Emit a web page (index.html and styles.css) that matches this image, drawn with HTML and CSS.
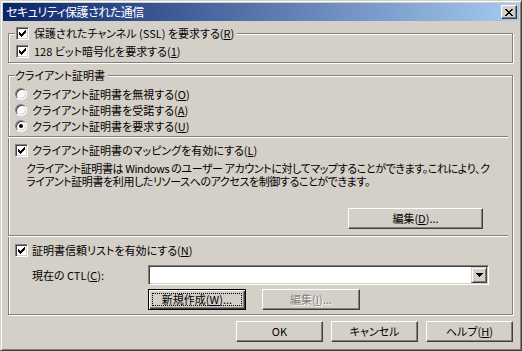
FILE: index.html
```html
<!DOCTYPE html>
<html lang="ja">
<head>
    <meta charset="UTF-8">
    <meta name="viewport" content="width=device-width, initial-scale=1.0">
    <link rel="stylesheet" href="styles.css">
</head>
<body>
    <div class="window">
        <div class="titlebar">
            <span class="title">セキュリティ保護された通信</span>
            <button class="close-btn">
                <svg width="8" height="7" viewBox="0 0 8 7" shape-rendering="crispEdges">
                    <rect x="0" y="0" width="2" height="1"/><rect x="6" y="0" width="2" height="1"/>
                    <rect x="1" y="1" width="2" height="1"/><rect x="5" y="1" width="2" height="1"/>
                    <rect x="2" y="2" width="4" height="1"/>
                    <rect x="3" y="3" width="2" height="1"/>
                    <rect x="2" y="4" width="4" height="1"/>
                    <rect x="1" y="5" width="2" height="1"/><rect x="5" y="5" width="2" height="1"/>
                    <rect x="0" y="6" width="2" height="1"/><rect x="6" y="6" width="2" height="1"/>
                </svg>
            </button>
        </div>

        <div class="client">
            <!-- SSL -->
            <div class="group group-ssl">
                <div class="check-row legend-check">
                    <span class="check-box checked"></span>
                    <span>保護されたチャンネル (SSL) を要求する(<u>R</u>)</span>
                </div>
                <div class="check-row second">
                    <span class="check-box checked"></span>
                    <span>128 ビット暗号化を要求する(<u>1</u>)</span>
                </div>
            </div>

            <!-- certificados de cliente -->
            <div class="group group-cert">
                <div class="legend-text">クライアント証明書</div>
                <div class="radios">
                    <div class="radio-row"><span class="radio"></span><span>クライアント証明書を無視する(<u>O</u>)</span></div>
                    <div class="radio-row"><span class="radio"></span><span>クライアント証明書を受諾する(<u>A</u>)</span></div>
                    <div class="radio-row"><span class="radio selected"></span><span>クライアント証明書を要求する(<u>U</u>)</span></div>
                </div>

                <div class="sep sep-top"></div>

                <div class="check-row inner mapping">
                    <span class="check-box checked"></span>
                    <span>クライアント証明書のマッピングを有効にする(<u>L</u>)</span>
                </div>
                <p class="desc">クライアント証明書は Windows のユーザー アカウントに対してマップすることができます。これにより、ク<br>ライアント証明書を利用したリソースへのアクセスを制御することができます。</p>
                <div class="edit-row">
                    <button class="btn btn-edit">編集(<u>D</u>)...</button>
                </div>

                <div class="sep sep-bottom"></div>

                <div class="check-row inner ctl-check">
                    <span class="check-box checked"></span>
                    <span>証明書信頼リストを有効にする(<u>N</u>)</span>
                </div>
                <div class="ctl-row">
                    <span class="ctl-label">現在の CTL(<u>C</u>):</span>
                    <div class="combo">
                        <span class="combo-btn">
                            <svg width="7" height="4" viewBox="0 0 7 4" shape-rendering="crispEdges">
                                <rect x="0" y="0" width="7" height="1"/>
                                <rect x="1" y="1" width="5" height="1"/>
                                <rect x="2" y="2" width="3" height="1"/>
                                <rect x="3" y="3" width="1" height="1"/>
                            </svg>
                        </span>
                    </div>
                </div>
                <div class="ctl-buttons">
                    <button class="btn btn-default">新規作成(<u>W</u>)...</button>
                    <button class="btn btn-disabled">編集(<u>I</u>)...</button>
                </div>
            </div>

            <div class="actions">
                <button class="btn btn-action">OK</button>
                <button class="btn btn-action">キャンセル</button>
                <button class="btn btn-action">ヘルプ(<u>H</u>)</button>
            </div>
        </div>
    </div>
</body>
</html>
```

FILE: styles.css
```css
body {
    margin: 0;
    background: #D4D0C8;
    font-family: "Noto Sans CJK JP", "DejaVu Sans", sans-serif;
    font-size: 11px;
    line-height: 13px;
    font-feature-settings: "palt";
    color: #000;
}

.window {
    width: 522px;
    height: 351px;
    box-sizing: border-box;
    border: 1px solid;
    border-color: #D4D0C8 #404040 #404040 #D4D0C8;
    box-shadow: inset 1px 1px #fff, inset -1px -1px #808080;
    padding: 2px;
    background: #D4D0C8;
    overflow: hidden;
}

/* barra de titulo */
.titlebar {
    display: flex;
    align-items: center;
    height: 18px;
    padding-left: 3px;
    background: linear-gradient(to right, #0A246A, #A6CAF0);
}
.title {
    flex: 1;
    color: #fff;
    font-size: 12px;
    letter-spacing: -0.5px;
    line-height: 18px;
}
.close-btn {
    display: flex;
    align-items: center;
    justify-content: center;
    width: 16px;
    height: 14px;
    margin-right: 2px;
    padding: 0;
    background: #D4D0C8;
    border: 1px solid;
    border-color: #fff #404040 #404040 #fff;
    box-shadow: inset -1px -1px #808080;
}

.client {
    padding: 12px 6px 0 5px;
}

.group {
    border: 1px solid #808080;
    box-shadow: inset 1px 1px #fff, 1px 1px #fff;
}

/* checkbox */
.check-row {
    display: flex;
    align-items: center;
    height: 13px;
    white-space: nowrap;
}
.check-box {
    box-sizing: border-box;
    width: 13px;
    height: 13px;
    margin-right: 5px;
    background: #fff;
    border: 1px solid;
    border-color: #808080 #fff #fff #808080;
    box-shadow: inset 1px 1px #404040, inset -1px -1px #D4D0C8;
}
.check-box.checked {
    background: #fff url("data:image/svg+xml;utf8,<svg xmlns='http://www.w3.org/2000/svg' width='7' height='7' shape-rendering='crispEdges'><path d='M6 0h1v3h-1zM5 1h1v3h-1zM4 2h1v3h-1zM3 3h1v3h-1zM2 4h1v3h-1zM1 3h1v3h-1zM0 2h1v3h-1z'/></svg>") no-repeat 2px 2px;
}

.group-ssl {
    padding-bottom: 4px;
}
.legend-check {
    width: fit-content;
    margin: -7px 0 0 6px;
    padding: 0 3px 0 1px;
    background: #D4D0C8;
}
.check-row.second {
    margin: 5px 0 0 7px;
}

.group-cert {
    margin-top: 12px;
    padding-bottom: 4px;
}
.legend-text {
    width: fit-content;
    height: 13px;
    margin: -7px 0 0 6px;
    padding: 0 3px 0 0;
    background: #D4D0C8;
}

.radios {
    margin: 4px 0 0 6px;
}
.radio-row {
    display: flex;
    align-items: center;
    height: 16px;
}
.radio {
    position: relative;
    box-sizing: border-box;
    width: 12px;
    height: 12px;
    margin-right: 5px;
    border-radius: 50%;
    background: #fff;
    border: 1px solid;
    border-color: #808080 #fff #fff #808080;
    box-shadow: inset 1px 1px #404040, inset -1px -1px #D4D0C8;
}
.radio.selected::after {
    content: "";
    position: absolute;
    left: 3px;
    top: 3px;
    width: 4px;
    height: 4px;
    border-radius: 50%;
    background: #000;
}

.sep {
    height: 0;
    margin: 0 4px 0 -1px;
    border-top: 1px solid #808080;
    border-bottom: 1px solid #fff;
}
.sep-top {
    margin-top: 2px;
}
.sep-bottom {
    margin-top: 6px;
}

.check-row.inner {
    height: 16px;
    margin-left: 6px;
}
.check-row.inner .check-box {
    margin-right: 4px;
}
.mapping {
    margin-top: 4px;
}
.ctl-check {
    margin-top: 5px;
}

.desc {
    margin: 4px 0 0 17px;
    line-height: 13px;
    letter-spacing: -0.4px;
    white-space: nowrap;
}

/* botones */
.btn {
    box-sizing: border-box;
    height: 21px;
    padding: 0;
    font-family: inherit;
    font-size: 11px;
    line-height: 13px;
    font-feature-settings: "palt";
    color: #000;
    background: #D4D0C8;
    border: 1px solid;
    border-color: #fff #404040 #404040 #fff;
    box-shadow: inset -1px -1px #808080;
}
.edit-row {
    display: flex;
    justify-content: flex-end;
    margin: 20px 29px 0 0;
}
.btn-edit {
    width: 135px;
}

.ctl-row {
    display: flex;
    align-items: center;
    margin: 7px 0 0 23px;
}
.ctl-label {
    width: 116px;
}
.combo {
    box-sizing: border-box;
    display: flex;
    justify-content: flex-end;
    width: 341px;
    height: 20px;
    padding: 2px;
    background: #fff;
    border: 1px solid;
    border-color: #808080 #fff #fff #808080;
    box-shadow: inset 1px 1px #404040, inset -1px -1px #D4D0C8;
}
.combo-btn {
    box-sizing: border-box;
    display: flex;
    align-items: center;
    justify-content: center;
    width: 16px;
    height: 16px;
    margin: -1px -1px 0 0;
    background: #D4D0C8;
    border: 1px solid;
    border-color: #D4D0C8 #404040 #404040 #D4D0C8;
    box-shadow: inset 1px 1px #fff, inset -1px -1px #808080;
}

.ctl-buttons {
    display: flex;
    gap: 16px;
    margin: 4px 0 0 139px;
}
.ctl-buttons .btn {
    width: 98px;
}
.btn-default {
    border-color: #000;
    box-shadow: inset 1px 1px #fff, inset -1px -1px #404040, inset -2px -2px #808080;
    outline: 1px dotted #000;
    outline-offset: -5px;
}
.btn-disabled {
    color: #808080;
    text-shadow: 1px 1px #fff;
}

.actions {
    display: flex;
    justify-content: flex-end;
    gap: 8px;
    margin-top: 6px;
}
.btn-action {
    width: 87px;
}
```
